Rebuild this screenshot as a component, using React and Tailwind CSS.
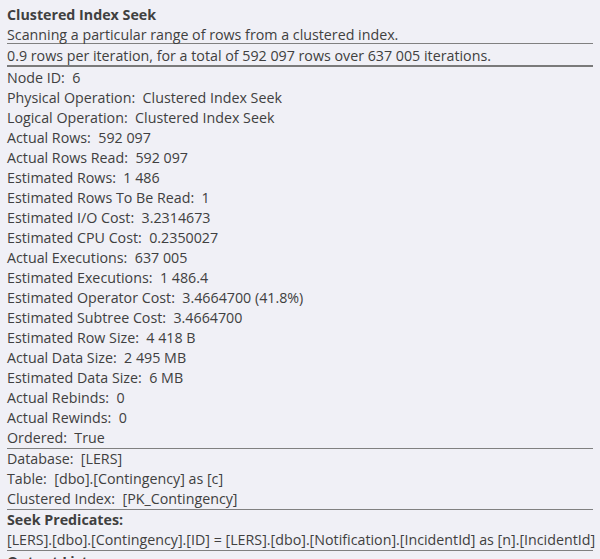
import React from 'react';

const props = [
  ['Node ID', '6'],
  ['Physical Operation', 'Clustered Index Seek'],
  ['Logical Operation', 'Clustered Index Seek'],
  ['Actual Rows', '592 097'],
  ['Actual Rows Read', '592 097'],
  ['Estimated Rows', '1 486'],
  ['Estimated Rows To Be Read', '1'],
  ['Estimated I/O Cost', '3.2314673'],
  ['Estimated CPU Cost', '0.2350027'],
  ['Actual Executions', '637 005'],
  ['Estimated Executions', '1 486.4'],
  ['Estimated Operator Cost', '3.4664700 (41.8%)'],
  ['Estimated Subtree Cost', '3.4664700'],
  ['Estimated Row Size', '4 418 B'],
  ['Actual Data Size', '2 495 MB'],
  ['Estimated Data Size', '6 MB'],
  ['Actual Rebinds', '0'],
  ['Actual Rewinds', '0'],
  ['Ordered', 'True'],
];

const objects = [
  ['Database', '[LERS]'],
  ['Table', '[dbo].[Contingency] as [c]'],
  ['Clustered Index', '[PK_Contingency]'],
];

function Row({ label, value }) {
  return (
    <div className="h-5 leading-5 whitespace-nowrap">
      {label}:&nbsp; {value}
    </div>
  );
}

export default function App() {
  return (
    <div
      className="w-[600px] h-[559px] overflow-hidden bg-[#f0f0f6] text-[#404040] text-[14.25px] pt-[5px] px-[7px]"
      style={{ fontFamily: '"Open Sans", "Noto Sans", sans-serif' }}
    >
      <div className="w-[586px]">
        {/* header */}
        <div className="h-5 leading-5 font-bold whitespace-nowrap">Clustered Index Seek</div>
        <div className="h-[18px] leading-5 whitespace-nowrap border-b border-[#808080] box-content">
          Scanning a particular range of rows from a clustered index.
        </div>
        <div className="h-[21px] leading-[24px] whitespace-nowrap border-b-2 border-[#7a7a7a] box-content">
          0.9 rows per iteration, for a total of 592 097 rows over 637 005 iterations.
        </div>

        {/* properties */}
        <div className="border-b border-[#808080] pt-px">
          {props.map(([l, v]) => (
            <Row key={l} label={l} value={v} />
          ))}
        </div>

        {/* objects */}
        <div className="border-b border-[#808080]">
          {objects.map(([l, v]) => (
            <Row key={l} label={l} value={v} />
          ))}
        </div>

        {/* seek predicates */}
        <div className="border-b border-[#808080]">
          <div className="h-5 leading-5 font-bold">Seek Predicates:</div>
          <div className="h-5 leading-5 whitespace-nowrap">
            [LERS].[dbo].[Contingency].[ID] = [LERS].[dbo].[Notification].[IncidentId] as [n].[IncidentId]
          </div>
        </div>

        <div className="h-5 leading-5 font-bold mt-px">Output List:</div>
      </div>
    </div>
  );
}
